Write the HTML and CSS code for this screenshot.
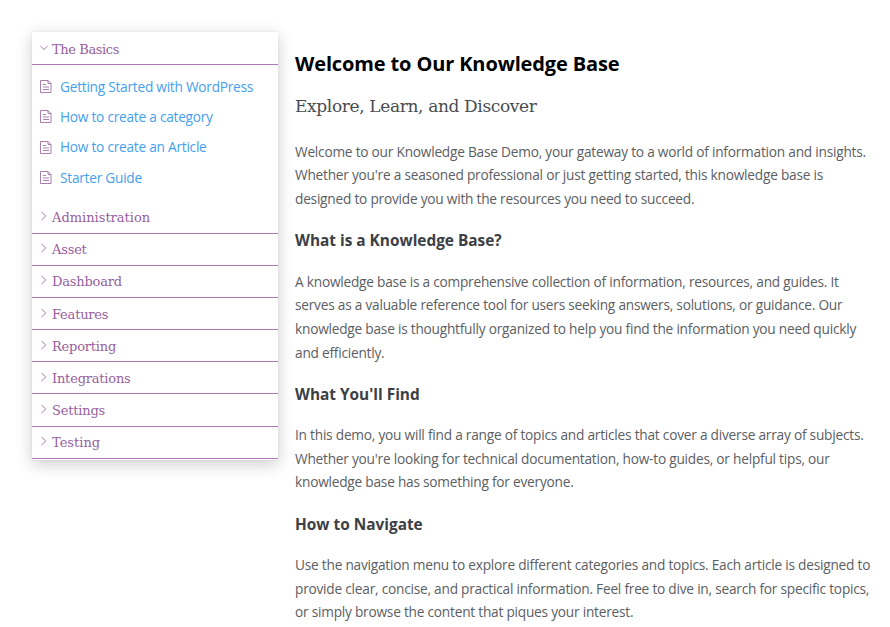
FILE: index.html
```
<!DOCTYPE html>
<html lang="en">
<head>
<meta charset="utf-8">
<title>Knowledge Base</title>
<link rel="stylesheet" href="styles.css">
</head>
<body>
<svg class="defs" aria-hidden="true">
  <symbol id="doc" viewBox="0 0 12 14"><path d="M.5 1.5h7.5l3 3v9H.5zM8 1.5v3H11M3 5.5h3M3 8h6M3 10.5h6"/></symbol>
  <symbol id="right" viewBox="0 0 8 10"><path d="M1.5 1l4.3 4-4.3 4"/></symbol>
  <symbol id="down" viewBox="0 0 8 10"><path d="M.3 3l3.7 3.6L7.7 3"/></symbol>
</svg>
<div class="page">
  <nav class="sidebar">
    <div class="category"><svg class="chevron"><use href="#down"/></svg>The Basics</div>
    <ul class="articles">
      <li><svg class="doc"><use href="#doc"/></svg><a>Getting Started with WordPress</a></li>
      <li><svg class="doc"><use href="#doc"/></svg><a>How to create a category</a></li>
      <li><svg class="doc"><use href="#doc"/></svg><a>How to create an Article</a></li>
      <li><svg class="doc"><use href="#doc"/></svg><a>Starter Guide</a></li>
    </ul>
    <div class="category wide"><svg class="chevron"><use href="#right"/></svg>Administration</div>
    <div class="category"><svg class="chevron"><use href="#right"/></svg>Asset</div>
    <div class="category"><svg class="chevron"><use href="#right"/></svg>Dashboard</div>
    <div class="category"><svg class="chevron"><use href="#right"/></svg>Features</div>
    <div class="category"><svg class="chevron"><use href="#right"/></svg>Reporting</div>
    <div class="category"><svg class="chevron"><use href="#right"/></svg>Integrations</div>
    <div class="category"><svg class="chevron"><use href="#right"/></svg>Settings</div>
    <div class="category wide"><svg class="chevron"><use href="#right"/></svg>Testing</div>
  </nav>
  <main class="content">
    <h1>Welcome to Our Knowledge Base</h1>
    <h2>Explore, Learn, and Discover</h2>
    <p>Welcome to our Knowledge Base Demo, your gateway to a world of information and insights.<br>Whether you're a seasoned professional or just getting started, this knowledge base is<br>designed to provide you with the resources you need to succeed.</p>
    <h3>What is a Knowledge Base?</h3>
    <p>A knowledge base is a comprehensive collection of information, resources, and guides. It<br>serves as a valuable reference tool for users seeking answers, solutions, or guidance. Our<br>knowledge base is thoughtfully organized to help you find the information you need quickly<br>and efficiently.</p>
    <h3>What You'll Find</h3>
    <p>In this demo, you will find a range of topics and articles that cover a diverse array of subjects.<br>Whether you're looking for technical documentation, how-to guides, or helpful tips, our<br>knowledge base has something for everyone.</p>
    <h3>How to Navigate</h3>
    <p>Use the navigation menu to explore different categories and topics. Each article is designed to<br>provide clear, concise, and practical information. Feel free to dive in, search for specific topics,<br>or simply browse the content that piques your interest.</p>
  </main>
</div>
</body>
</html>
```
FILE: styles.css
```
* { box-sizing: border-box; }
body { margin: 0; height: 627px; overflow: hidden; background: #fff; font-family: "Open Sans", sans-serif; color: #5b5e63; }
.defs { position: absolute; width: 0; height: 0; }
svg { fill: none; flex: none; }
.page { display: flex; align-items: flex-start; gap: 17px; padding: 32px 0 0 32px; }
.sidebar { flex: none; width: 246px; height: 428px; background: #fff; box-shadow: 0 0 2px rgba(0,0,0,.08), 0 4px 15px rgba(0,0,0,.2); }
.category { display: flex; align-items: center; height: 32.17px; padding: 1px 8px 0; border-bottom: 1px solid #b07ab8; font: 13px "DejaVu Serif", serif; letter-spacing: -.2px; color: #96609e; white-space: nowrap; }
.category.wide { letter-spacing: 0; }
.category:first-child { height: 33px; padding-top: 2px; letter-spacing: -.4px; }
.chevron { width: 8px; height: 10px; margin: -3px 4px 0 0; stroke: #93579a; stroke-width: .8; }
.articles { list-style: none; margin: 0; padding: 6px 8px 9.3px; }
.articles li { display: flex; align-items: center; gap: 8px; height: 30.3px; font-size: 13.7px; letter-spacing: -.25px; color: #459ff0; white-space: nowrap; }
.doc { width: 12px; height: 14px; stroke: #a070a5; stroke-width: .9; }
.content { flex: none; white-space: nowrap; }
h1 { margin: 16px 0 0; font-size: 20px; line-height: 32px; letter-spacing: -.13px; color: #000; }
h2 { margin: 10px 0 0; font: 17px/32px "DejaVu Serif", serif; letter-spacing: -.36px; color: #484b50; }
p { margin: 17.8px 0 0; font-size: 13.7px; line-height: 23.65px; letter-spacing: -.23px; }
h3 { margin: 18.7px 0 0; font-size: 15.4px; line-height: 24px; color: #3c4045; }
h3 + p { margin-top: 16.2px; }
```
